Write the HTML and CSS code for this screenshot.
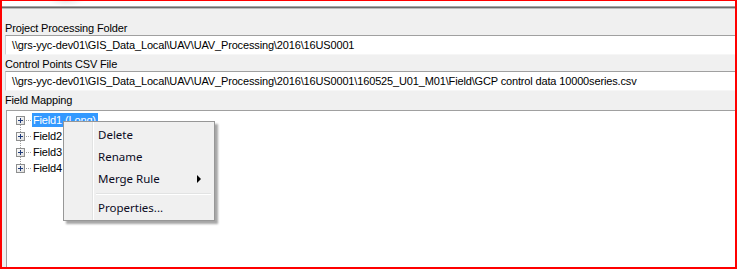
FILE: index.html
```html
<!DOCTYPE html>
<html>
<head>
<meta charset="utf-8">
<link rel="stylesheet" href="styles.css">
</head>
<body>
<div class="frame">
  <div class="topstrip"></div>
  <div class="rule"></div>
  <div class="panel">
    <div class="label first">Project Processing Folder</div>
    <div class="textbox">\\grs-yyc-dev01\GIS_Data_Local\UAV\UAV_Processing\2016\16US0001</div>
    <div class="label">Control Points CSV File</div>
    <div class="textbox">\\grs-yyc-dev01\GIS_Data_Local\UAV\UAV_Processing\2016\16US0001\160525_U01_M01\Field\GCP control data 10000series.csv</div>
    <div class="label">Field Mapping</div>
    <div class="tree">
      <div class="nodes">
        <div class="node">
          <svg class="expander" width="9" height="9" viewBox="0 0 9 9"><defs><linearGradient id="g1" x1="0" y1="0" x2="1" y2="1"><stop offset="0" stop-color="#ffffff"/><stop offset="1" stop-color="#dcdcdc"/></linearGradient></defs><rect x="0.5" y="0.5" width="8" height="8" fill="url(#g1)" stroke="#8e8f8f"/><path d="M2 4.5H7M4.5 2V7" stroke="#1f3b7a" stroke-width="1"/></svg>
          <span class="dots"></span>
          <span class="name selected">Field1 (Long)</span>
        </div>
        <div class="node">
          <svg class="expander" width="9" height="9" viewBox="0 0 9 9"><rect x="0.5" y="0.5" width="8" height="8" fill="url(#g1)" stroke="#8e8f8f"/><path d="M2 4.5H7M4.5 2V7" stroke="#1f3b7a" stroke-width="1"/></svg>
          <span class="dots"></span>
          <span class="name">Field2</span>
        </div>
        <div class="node">
          <svg class="expander" width="9" height="9" viewBox="0 0 9 9"><rect x="0.5" y="0.5" width="8" height="8" fill="url(#g1)" stroke="#8e8f8f"/><path d="M2 4.5H7M4.5 2V7" stroke="#1f3b7a" stroke-width="1"/></svg>
          <span class="dots"></span>
          <span class="name">Field3</span>
        </div>
        <div class="node">
          <svg class="expander" width="9" height="9" viewBox="0 0 9 9"><rect x="0.5" y="0.5" width="8" height="8" fill="url(#g1)" stroke="#8e8f8f"/><path d="M2 4.5H7M4.5 2V7" stroke="#1f3b7a" stroke-width="1"/></svg>
          <span class="dots"></span>
          <span class="name">Field4</span>
        </div>
      </div>
    </div>
  </div>
  <div class="menu">
    <div class="item">Delete</div>
    <div class="item">Rename</div>
    <div class="item has-sub">Merge Rule<span class="arrow"></span></div>
    <div class="sep"></div>
    <div class="item">Properties...</div>
  </div>
</div>
</body>
</html>
```
FILE: styles.css
```css
html, body {
  margin: 0;
  padding: 0;
  background: #ffffff;
}

.frame {
  position: relative;
  width: 737px;
  height: 269px;
  box-sizing: border-box;
  border-top: 1px solid #ff0000;
  border-left: 2px solid #ff0000;
  border-right: 2px solid #ff0000;
  border-bottom: 2px solid #ff0000;
  display: flex;
  flex-direction: column;
  overflow: hidden;
  font-family: "Liberation Sans", Arial, sans-serif;
  font-size: 11px;
  letter-spacing: -0.15px;
  color: #000;
}

.topstrip {
  height: 5px;
  flex: none;
  background: radial-gradient(ellipse 18px 5px at 64px 0px, rgba(0,0,0,0.09), rgba(0,0,0,0));
}

.rule {
  height: 1px;
  flex: none;
  background: #6b6b6b;
  border-top: 1px solid #a6a6a6;
  border-bottom: 1px solid #bdbdbd;
}

.panel {
  flex: 1;
  display: flex;
  flex-direction: column;
  background: #f0f0f0;
  padding: 0 0 0 3px;
  min-height: 0;
}

.label {
  height: 16px;
  line-height: 18px;
  white-space: nowrap;
  flex: none;
}

.label.first {
  margin-top: 10px;
}

.textbox {
  height: 18px;
  line-height: 18px;
  flex: none;
  background: #fff;
  border-top: 1px solid #a0a0a0;
  border-left: 1px solid #cfcfcf;
  border-bottom: 1px solid #f6f6f6;
  padding-left: 6px;
  white-space: nowrap;
  overflow: hidden;
}

.tree {
  flex: 1;
  margin-top: 3px;
  margin-left: 1px;
  background: #fff;
  border-top: 1px solid #a0a0a0;
  border-left: 1px solid #a0a0a0;
  padding: 1px 0 0 9px;
}

.nodes {
  position: relative;
}

.nodes::before {
  content: "";
  position: absolute;
  left: 4px;
  top: 8px;
  height: 48px;
  border-left: 1px dotted #a0a0a0;
}

.node {
  height: 16px;
  display: flex;
  align-items: center;
  position: relative;
}

.expander {
  display: block;
  flex: none;
  position: relative;
  z-index: 1;
}

.dots {
  width: 5px;
  margin-left: 1px;
  border-top: 1px dotted #a0a0a0;
  align-self: center;
}

.name {
  margin-left: 1px;
  padding: 0 2px 0 1px;
  height: 14px;
  line-height: 14px;
  white-space: nowrap;
}

.name.selected {
  background: #3399ff;
  color: #fff;
}

.menu {
  position: absolute;
  left: 61px;
  top: 120px;
  width: 152px;
  height: 100px;
  box-sizing: border-box;
  background: #f0f0f0;
  border: 1px solid #979797;
  padding: 2px;
  box-shadow: 3px 3px 2px rgba(0,0,0,0.35);
  font-family: "Noto Sans", "Open Sans", sans-serif;
  font-size: 11.5px;
  letter-spacing: 0;
  color: #0b0b1e;
  background-image: linear-gradient(to right, transparent 28px, #e2e3e3 28px, #e2e3e3 29px, #ffffff 29px, #ffffff 30px, transparent 30px);
}

.item {
  height: 22px;
  line-height: 22px;
  padding-left: 32px;
  position: relative;
}

.arrow {
  position: absolute;
  right: 11px;
  top: 7px;
  width: 0;
  height: 0;
  border-top: 4px solid transparent;
  border-bottom: 4px solid transparent;
  border-left: 4px solid #000;
}

.sep {
  height: 7px;
  margin-left: 30px;
  position: relative;
}

.sep::before {
  content: "";
  position: absolute;
  left: 0;
  right: 1px;
  top: 3px;
  border-top: 1px solid #e2e3e3;
  border-bottom: 1px solid #ffffff;
}
```
